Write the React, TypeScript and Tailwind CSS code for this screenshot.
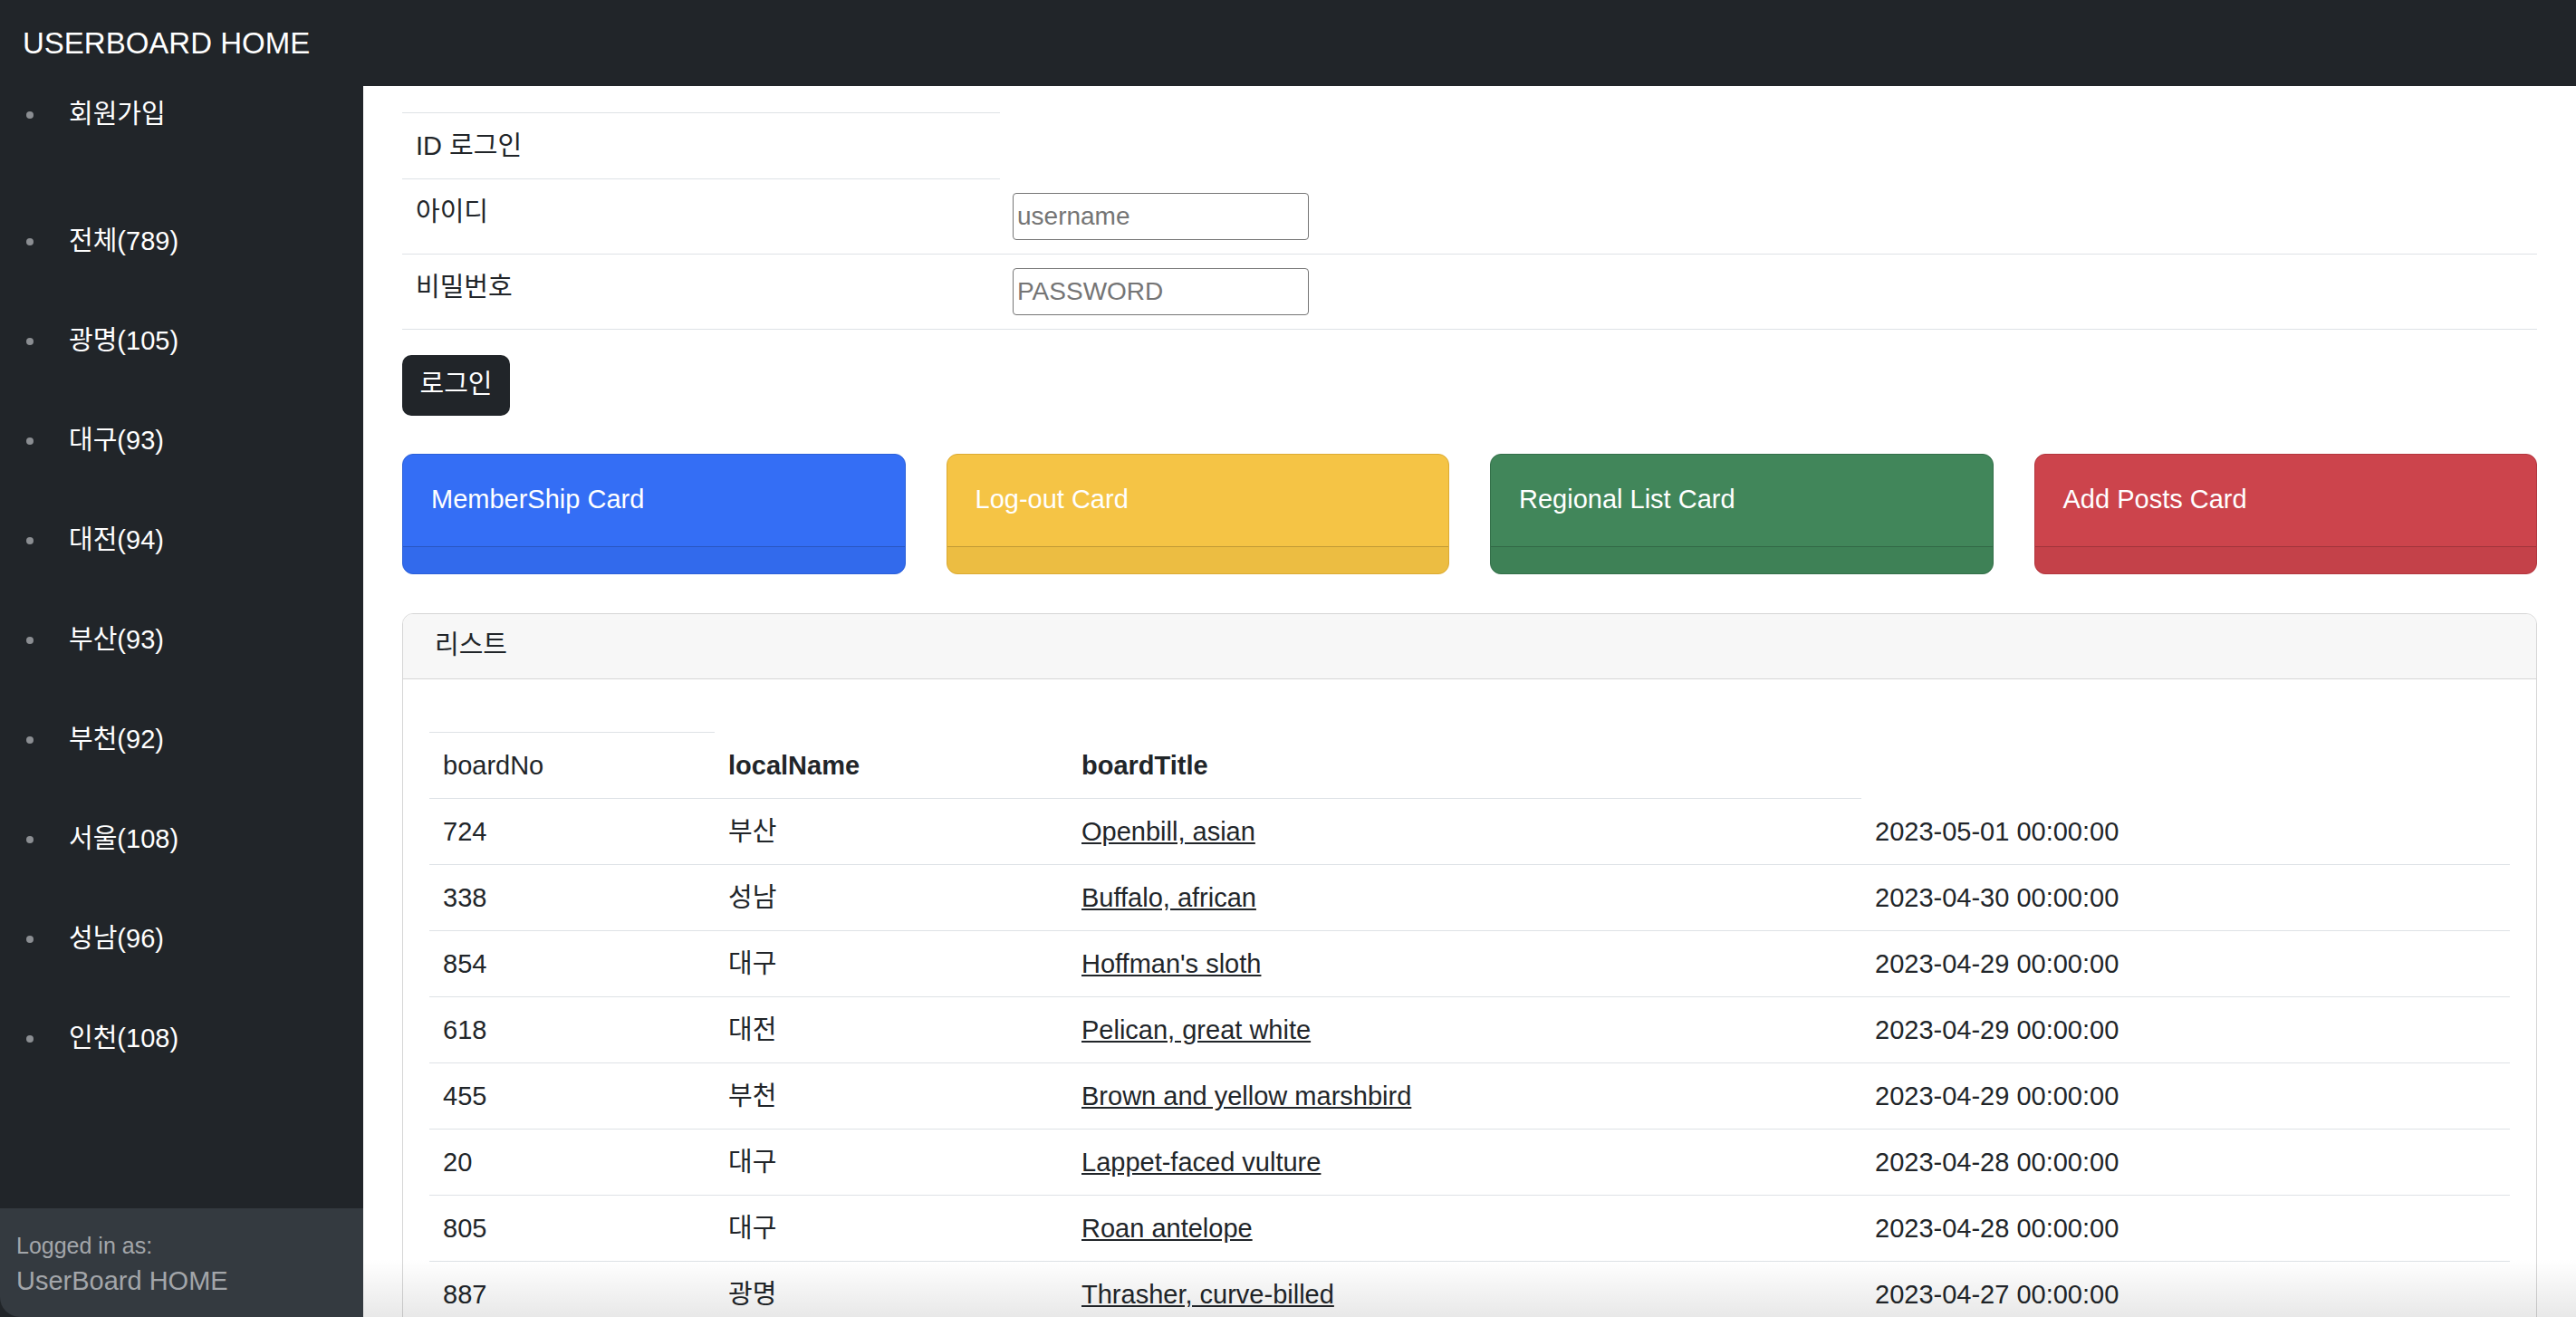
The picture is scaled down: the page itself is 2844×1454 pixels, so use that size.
import React from "react";

const regions = [
  "전체(789)",
  "광명(105)",
  "대구(93)",
  "대전(94)",
  "부산(93)",
  "부천(92)",
  "서울(108)",
  "성남(96)",
  "인천(108)",
];

const cards = [
  { title: "MemberShip Card", cls: "bg-[#346ef5] border-[#2b60d8]" },
  { title: "Log-out Card", cls: "bg-[#f5c445] border-[#dcab33]" },
  { title: "Regional List Card", cls: "bg-[#41865a] border-[#336f49]" },
  { title: "Add Posts Card", cls: "bg-[#cc444c] border-[#b3363e]" },
];

const posts: [number, string, string, string][] = [
  [724, "부산", "Openbill, asian", "2023-05-01 00:00:00"],
  [338, "성남", "Buffalo, african", "2023-04-30 00:00:00"],
  [854, "대구", "Hoffman's sloth", "2023-04-29 00:00:00"],
  [618, "대전", "Pelican, great white", "2023-04-29 00:00:00"],
  [455, "부천", "Brown and yellow marshbird", "2023-04-29 00:00:00"],
  [20, "대구", "Lappet-faced vulture", "2023-04-28 00:00:00"],
  [805, "대구", "Roan antelope", "2023-04-28 00:00:00"],
  [887, "광명", "Thrasher, curve-billed", "2023-04-27 00:00:00"],
];

const cell = "px-[15px] py-[15px] leading-[42px] text-left align-top";

const App = () => {
  return (
    <div className="h-[1454px] overflow-hidden flex flex-col bg-white text-[#212529] text-[29px] font-[family-name:'Liberation_Sans','Noto_Sans_CJK_KR',sans-serif]">
      {/* 상단 네비게이션 */}
      <header className="h-[95px] shrink-0 bg-[#212529] flex items-center pl-[25px]">
        <span className="text-[33px] text-white">USERBOARD HOME</span>
      </header>

      <div className="flex flex-1 min-h-0">
        {/* 사이드바 */}
        <aside className="w-[401px] shrink-0 bg-[#212529] flex flex-col justify-between">
          <ul className="text-white">
            <li className="h-[64px] flex items-center pl-[29px]">
              <span className="w-[8px] h-[8px] rounded-full bg-[#8b8e92]" />
              <span className="ml-[39px]">회원가입</span>
            </li>
            <li className="h-[53px]" />
            {regions.map((r) => (
              <li key={r} className="h-[110px] flex items-center pl-[29px]">
                <span className="w-[8px] h-[8px] rounded-full bg-[#8b8e92]" />
                <span className="ml-[39px]">{r}</span>
              </li>
            ))}
          </ul>
          <div className="h-[120px] bg-[#343a40] rounded-bl-[22px] px-[18px] pt-[22px] text-[#a3a6aa]">
            <div className="text-[25px] leading-[38px]">Logged in as:</div>
            <div className="text-[29px] leading-[40px]">UserBoard HOME</div>
          </div>
        </aside>

        {/* 본문 */}
        <main className="flex-1 relative px-[43px] overflow-hidden">
          <table className="mt-[29px] w-full border-collapse">
            <tbody>
              <tr>
                <td className={`${cell} w-[660px] border-y border-[#dee2e6]`}>ID 로그인</td>
              </tr>
              <tr>
                <td className={`${cell} border-b border-[#dee2e6]`}>아이디</td>
                <td className="px-[14px] py-[15px] border-b border-[#dee2e6]">
                  <input
                    className="block h-[52px] w-[327px] border border-[#767676] rounded-[4px] px-[4px] text-[28px] placeholder:text-[#757575] outline-none"
                    placeholder="username"
                  />
                </td>
              </tr>
              <tr>
                <td className={`${cell} border-b border-[#dee2e6]`}>비밀번호</td>
                <td className="px-[14px] py-[15px] border-b border-[#dee2e6]">
                  <input
                    type="password"
                    className="block h-[52px] w-[327px] border border-[#767676] rounded-[4px] px-[4px] text-[28px] placeholder:text-[#757575] outline-none"
                    placeholder="PASSWORD"
                  />
                </td>
              </tr>
            </tbody>
          </table>

          <button className="mt-[28px] h-[67px] w-[119px] rounded-[10px] bg-[#212529] text-white text-[29px]">
            로그인
          </button>

          {/* 카드 */}
          <div className="mt-[42px] grid grid-cols-4 gap-[45px]">
            {cards.map((c) => (
              <div key={c.title} className={`rounded-[12px] border overflow-hidden text-white ${c.cls}`}>
                <div className="h-[101px] px-[31px] flex items-center">{c.title}</div>
                <div className="h-[30px] border-t border-black/[0.18] bg-black/[0.035]" />
              </div>
            ))}
          </div>

          {/* 리스트 */}
          <div className="mt-[43px] rounded-[12px] border border-[#d6d6d6] overflow-hidden">
            <div className="h-[72px] bg-[#f7f7f7] border-b border-[#d6d6d6] px-[35px] flex items-center">
              리스트
            </div>
            <div className="px-[29px] pt-[29px]">
              <table className="w-full table-fixed border-collapse">
                <colgroup>
                  <col className="w-[315px]" />
                  <col className="w-[390px]" />
                  <col className="w-[876px]" />
                  <col />
                </colgroup>
                <thead>
                  <tr>
                    <td className="h-[30px] p-0 border-b border-[#dee2e6]" />
                  </tr>
                  <tr>
                    <td className={`${cell} border-b border-[#dee2e6]`}>boardNo</td>
                    <th className={`${cell} font-bold border-b border-[#dee2e6]`}>localName</th>
                    <th className={`${cell} font-bold border-b border-[#dee2e6]`}>boardTitle</th>
                  </tr>
                </thead>
                <tbody>
                  {posts.map(([no, local, title, date]) => (
                    <tr key={no} className="border-b border-[#dee2e6]">
                      <td className={cell}>{no}</td>
                      <td className={cell}>{local}</td>
                      <td className={cell}>
                        <a href="#" className="underline">{title}</a>
                      </td>
                      <td className={cell}>{date}</td>
                    </tr>
                  ))}
                </tbody>
              </table>
            </div>
          </div>

          <div className="pointer-events-none absolute inset-x-0 bottom-0 h-[64px] bg-linear-to-b from-transparent to-black/[0.09]" />
        </main>
      </div>
    </div>
  );
};

export default App;
